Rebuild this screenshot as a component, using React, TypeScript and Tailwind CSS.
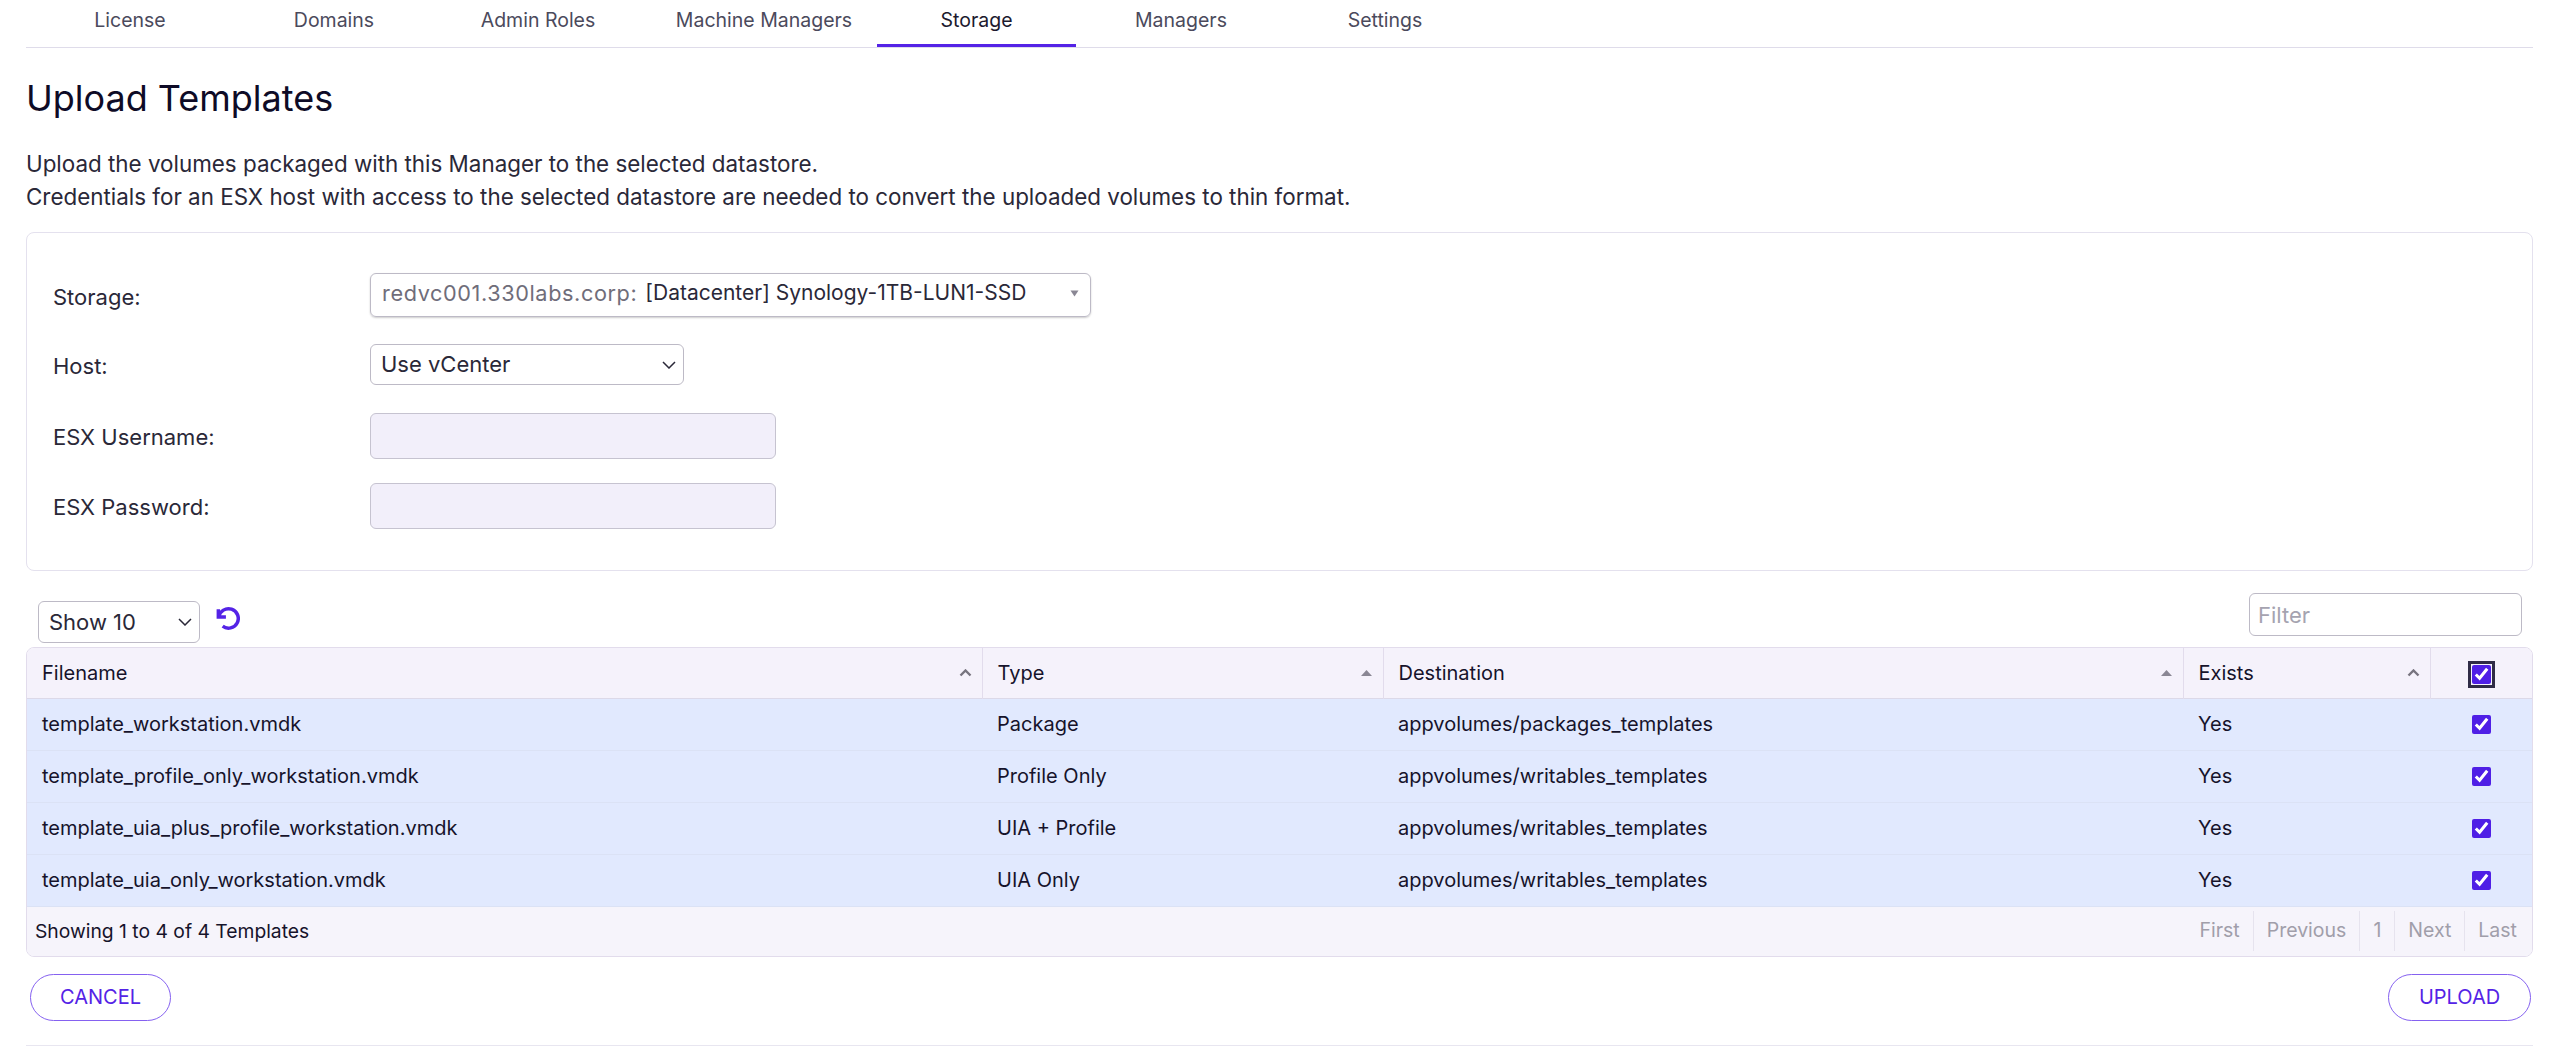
const font = { fontFamily: '"Inter", "Noto Sans", sans-serif' };

const tabs = [
  { name: 'License', cls: 'w-[198px]' },
  { name: 'Domains', cls: 'w-[198px]' },
  { name: 'Admin Roles', cls: 'w-[198px]' },
  { name: 'Machine Managers', cls: 'w-[228px] pl-[14px]' },
  { name: 'Storage', cls: 'w-[199px]', active: true },
  { name: 'Managers', cls: 'w-[198px]' },
  { name: 'Settings', cls: 'w-[198px]' },
];

const rows = [
  ['template_workstation.vmdk', 'Package', 'appvolumes/packages_templates'],
  ['template_profile_only_workstation.vmdk', 'Profile Only', 'appvolumes/writables_templates'],
  ['template_uia_plus_profile_workstation.vmdk', 'UIA + Profile', 'appvolumes/writables_templates'],
  ['template_uia_only_workstation.vmdk', 'UIA Only', 'appvolumes/writables_templates'],
];

function SelectChevron() {
  return (
    <svg width="14" height="8" viewBox="0 0 14 8" fill="none" stroke="#2a2838" strokeWidth="1.5" className="pointer-events-none absolute right-[8px] top-1/2 -translate-y-1/2">
      <path d="M1 1 L7 7 L13 1" />
    </svg>
  );
}

function SortCaret({ chevron }: { chevron?: boolean }) {
  return (
    <svg width="13" height="8" viewBox="0 0 13 8" className="absolute right-[10px] top-[21px]">
      {chevron ? (
        <path d="M1.5 6.5 L6.5 1.5 L11.5 6.5" fill="none" stroke="#77747f" strokeWidth="2.4" />
      ) : (
        <path d="M6.5 1 L12 7 H1 Z" fill="#8a8794" />
      )}
    </svg>
  );
}

function HeaderCell({ label, chevron }: { label: string; chevron?: boolean }) {
  return (
    <th className="relative h-[50px] border-r border-[#e2dcec] pl-[15px] text-left font-normal">
      {label}
      <SortCaret chevron={chevron} />
    </th>
  );
}

export default function App() {
  return (
    <div style={font} className="h-[1052px] overflow-hidden bg-white pl-[26px] pr-[27px] text-[#16132b]">
      {/* tabs */}
      <div className="flex h-[48px] gap-[6px] border-b border-[#dfdcea] pl-[5px]">
        {tabs.map((t) => (
          <div
            key={t.name}
            className={`${t.cls} flex h-[47px] items-start justify-center pt-[6px] text-[19.5px] ${
              t.active ? 'border-b-[3px] border-[#5423e6] text-[#1c1a2e]' : 'text-[#4b4a5c]'
            }`}
          >
            {t.name}
          </div>
        ))}
      </div>

      <h1 className="mt-[27px] text-[36px] leading-[46px] font-normal text-[#0e0b26]">Upload Templates</h1>

      <div className="mt-[26px] text-[22.4px] leading-[33px] text-[#2a2838]">
        <p>Upload the volumes packaged with this Manager to the selected datastore.</p>
        <p>Credentials for an ESX host with access to the selected datastore are needed to convert the uploaded volumes to thin format.</p>
      </div>

      {/* form panel */}
      <div className="mt-[19px] h-[339px] rounded-lg border border-[#e4e1ee] pl-[26px] pt-[40px] text-[22px] text-[#2a2838]">
        <div className="flex h-[44px] items-center">
          <div className="w-[317px] pt-[4px]">Storage:</div>
          <div className="flex h-[44px] w-[721px] items-center rounded-md border border-[#bdbac6] pl-[11px] pr-[11px] pb-[4px] shadow-[0_1px_2px_rgba(0,0,0,0.2)]">
            <span className="text-[21.7px] tracking-[0.6px] text-[#6f6d7a]">redvc001.330labs.corp:</span>
            <span className="ml-[8px] text-[21px]">[Datacenter] Synology-1TB-LUN1-SSD</span>
            <svg width="9" height="7" viewBox="0 0 9 7" className="ml-auto">
              <path d="M0.5 0.5 H8.5 L4.5 6.5 Z" fill="#8a8794" />
            </svg>
          </div>
        </div>
        <div className="mt-[27px] flex h-[41px] items-center">
          <div className="w-[317px] pt-[4px]">Host:</div>
          <div className="relative">
            <select className="block h-[41px] w-[314px] appearance-none rounded-md border border-[#bdbac6] bg-white pl-[10px] text-[22px] text-[#2a2838]">
              <option>Use vCenter</option>
            </select>
            <SelectChevron />
          </div>
        </div>
        <div className="mt-[28px] flex h-[46px] items-center">
          <div className="w-[317px] pt-[2px]">ESX Username:</div>
          <input readOnly className="h-[46px] w-[406px] rounded-md border border-[#c6c3d0] bg-[#f2effa]" />
        </div>
        <div className="mt-[24px] flex h-[46px] items-center">
          <div className="w-[317px] pt-[2px]">ESX Password:</div>
          <input readOnly type="password" className="h-[46px] w-[406px] rounded-md border border-[#c6c3d0] bg-[#f2effa]" />
        </div>
      </div>

      {/* table toolbar */}
      <div className="flex h-[76px] justify-between pl-[12px] pr-[11px]">
        <div className="flex items-start pt-[30px]">
          <div className="relative">
            <select className="block h-[42px] w-[162px] appearance-none rounded-md border border-[#bdbac6] bg-white pl-[10px] text-[22px] text-[#2a2838]">
              <option>Show 10</option>
            </select>
            <SelectChevron />
          </div>
          <svg width="26" height="26" viewBox="0 0 24 24" fill="none" stroke="#5423e6" strokeWidth="3.2" className="ml-[14px] mt-[4px]">
            <path d="M4 4v7h7" strokeLinejoin="miter" />
            <path d="M4.5 11A9 9 0 1 1 8 19.6" />
          </svg>
        </div>
        <div className="pt-[22px]">
          <input
            readOnly
            placeholder="Filter"
            className="h-[43px] w-[273px] rounded-md border border-[#bdbac6] bg-white pl-[8px] text-[22px] placeholder:text-[#a5a3b0]"
          />
        </div>
      </div>

      {/* table */}
      <div className="overflow-hidden rounded-lg border border-[#e2dcec] text-[20px]">
        <table className="w-full table-fixed border-collapse">
          <colgroup>
            <col className="w-[955px]" />
            <col className="w-[401px]" />
            <col className="w-[800px]" />
            <col className="w-[247px]" />
            <col />
          </colgroup>
          <thead className="bg-[#f5f2fb]">
            <tr className="border-b border-[#dcd9e8]">
              <HeaderCell label="Filename" chevron />
              <HeaderCell label="Type" />
              <HeaderCell label="Destination" />
              <HeaderCell label="Exists" chevron />
              <th className="h-[50px] text-center">
                <input
                  type="checkbox"
                  checked
                  readOnly
                  className="h-[19px] w-[19px] align-middle accent-[#4f1fe6] outline-[3px] outline-offset-[1px] outline-[#2f2c46]"
                />
              </th>
            </tr>
          </thead>
          <tbody className="bg-[#e1e9fe]">
            {rows.map((r) => (
              <tr key={r[0]} className="border-b border-[#dbe2f5]">
                <td className="h-[52px] pb-[1px] pl-[15px]">{r[0]}</td>
                <td className="pb-[1px] pl-[15px]">{r[1]}</td>
                <td className="pb-[1px] pl-[15px]">{r[2]}</td>
                <td className="pb-[1px] pl-[15px]">Yes</td>
                <td className="pb-[2px] text-center">
                  <input type="checkbox" checked readOnly className="h-[19px] w-[19px] align-middle accent-[#4f1fe6]" />
                </td>
              </tr>
            ))}
          </tbody>
        </table>
        <div className="flex h-[49px] items-center justify-between bg-[#f6f4fb] pl-[8px] pr-[15px] text-[19.3px]">
          <span>Showing 1 to 4 of 4 Templates</span>
          <div className="flex h-[40px] items-center text-[19.5px] text-[#a19eaa]">
            <span className="pr-[13px]">First</span>
            <span className="flex h-full items-center border-l border-[#e6e3ee] px-[13px]">Previous</span>
            <span className="flex h-full items-center border-l border-[#e6e3ee] px-[13px]">1</span>
            <span className="flex h-full items-center border-l border-[#e6e3ee] px-[13px]">Next</span>
            <span className="flex h-full items-center border-l border-[#e6e3ee] pl-[13px]">Last</span>
          </div>
        </div>
      </div>

      {/* actions */}
      <div className="mt-[17px] flex justify-between border-b border-[#e8e6f0] pb-[24px] pl-[4px] pr-[2px]">
        <button className="h-[47px] w-[141px] rounded-full border border-[#8561f0] text-[20px] text-[#5423e6]">CANCEL</button>
        <button className="h-[47px] w-[143px] rounded-full border border-[#8561f0] text-[20px] text-[#5423e6]">UPLOAD</button>
      </div>
    </div>
  );
}
